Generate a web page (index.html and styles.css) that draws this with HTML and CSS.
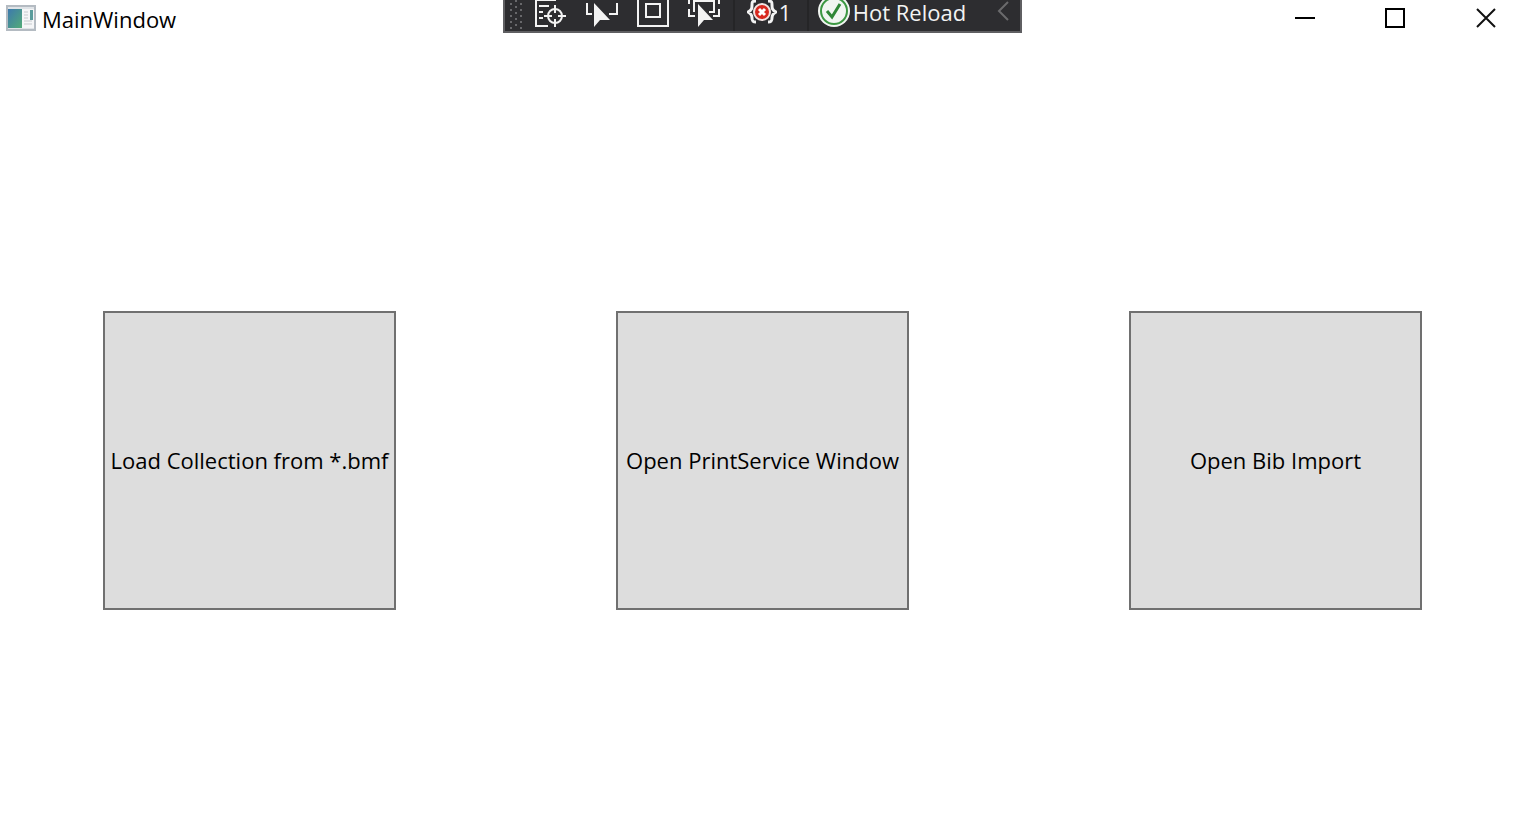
FILE: index.html
```html
<!DOCTYPE html>
<html lang="en">
<head>
<meta charset="utf-8">
<title>MainWindow</title>
<link rel="stylesheet" href="styles.css">
</head>
<body>
<header class="titlebar">
  <div class="caption">
    <svg class="app-icon" width="30" height="26" viewBox="0 0 30 26" aria-hidden="true">
      <defs><linearGradient id="pane" x1="0" y1="0" x2="1" y2="1"><stop offset="0" stop-color="#3d79ad"/><stop offset="1" stop-color="#52ab78"/></linearGradient></defs>
      <rect x="1" y="1" width="28" height="24" fill="#dfe3e7" stroke="#b4bbc2" stroke-width="2"/>
      <rect x="2" y="4" width="14" height="19" fill="url(#pane)"/>
      <rect x="16" y="4" width="12" height="19" fill="#f5f6f7"/>
      <path d="M18 7h4M18 10h4M18 13h4M18 16h8M18 19h8" stroke="#c5c9cd"/>
      <rect x="24" y="5" width="3" height="10" fill="#5a9c9c"/>
    </svg>
    <h1 class="caption-text">MainWindow</h1>
  </div>
  <div class="toolbar" role="toolbar" aria-label="Debug tools">
    <svg class="grip" width="12" height="31" viewBox="0 0 12 31" aria-hidden="true">
      <path d="M1 3v27M11 3v27" stroke="#68686b" stroke-width="2" stroke-dasharray="2 4"/>
      <path d="M6 0v30" stroke="#68686b" stroke-width="2" stroke-dasharray="2 4"/>
    </svg>
    <button class="tool" aria-label="Go to live visual tree">
      <svg width="32" height="31" viewBox="0 0 32 31" fill="none" stroke="#f3f3f3" stroke-width="2">
        <path d="M21 0H1v26h12M4 6h10M4 12h4M4 18h4"/>
        <circle cx="20" cy="16" r="7"/>
        <path d="M20 5v8M20 19v8M9 16h8M23 16h8"/>
      </svg>
    </button>
    <button class="tool" aria-label="Select element">
      <svg width="32" height="31" viewBox="0 0 32 31" fill="none" stroke="#f3f3f3" stroke-width="2">
        <path d="M1 3v11h5M31 3v11h-8"/>
        <path d="M8 3v24l6-7h10z" fill="#f3f3f3" stroke="none"/>
      </svg>
    </button>
    <button class="tool" aria-label="Display layout adorners">
      <svg width="32" height="31" viewBox="0 0 32 31" fill="none" stroke="#f3f3f3" stroke-width="2">
        <path d="M1 0v26h30V0M9 4h14v13H9z"/>
      </svg>
    </button>
    <button class="tool" aria-label="Track focused element">
      <svg width="32" height="31" viewBox="0 0 32 31" fill="none" stroke="#f3f3f3" stroke-width="2">
        <path d="M1 0v4M1 9v7h6M31 0v4M31 9v7h-6M6 12V1h20v11h-5"/>
        <path d="M10 4v23l6-7h9z" fill="#f3f3f3" stroke="none"/>
      </svg>
    </button>
    <span class="divider"></span>
    <button class="tool tool-errors" aria-label="1 binding failure">
      <svg width="30" height="31" viewBox="0 0 30 31" fill="none">
        <path d="M9 1C5 1 5 2 5 5s0 5-4 7c4 2 4 4 4 6s0 4 4 4M21 1c4 0 4 1 4 4s0 5 4 7c-4 2-4 4-4 6s0 4-4 4" stroke="#f3f3f3" stroke-width="3"/>
        <circle cx="15" cy="12" r="8" fill="#d8281e" stroke="#f3e4e2" stroke-width="2"/>
        <path d="M12 9l6 6M18 9l-6 6" stroke="#fff" stroke-width="3"/>
      </svg>
      <span>1</span>
    </button>
    <span class="divider"></span>
    <button class="tool tool-reload">
      <svg width="32" height="31" viewBox="0 0 32 31" fill="none">
        <circle cx="16" cy="11" r="16" fill="#f1f5f1"/>
        <circle cx="16" cy="11" r="13" stroke="#3c9742" stroke-width="2"/>
        <path d="M9 11l5 6 8-13" stroke="#2f8636" stroke-width="3"/>
      </svg>
      <span>Hot Reload</span>
    </button>
    <button class="tool tool-collapse" aria-label="Collapse toolbar">
      <svg width="14" height="31" viewBox="0 0 14 31" fill="none"><path d="M11 2L2 11l9 9" stroke="#6a6a6c" stroke-width="2"/></svg>
    </button>
  </div>
  <div class="window-controls">
    <button class="window-button" aria-label="Minimize"><svg width="20" height="20" viewBox="0 0 20 20"><path d="M0 10h20" stroke="#000" stroke-width="2"/></svg></button>
    <button class="window-button" aria-label="Maximize"><svg width="20" height="20" viewBox="0 0 20 20"><path d="M1 1h18v18H1z" fill="none" stroke="#000" stroke-width="2"/></svg></button>
    <button class="window-button" aria-label="Close"><svg width="20" height="20" viewBox="0 0 20 20"><path d="M1 1l18 18M19 1L1 19" stroke="#111" stroke-width="2"/></svg></button>
  </div>
</header>
<main class="content">
  <button class="tile">Load Collection from *.bmf</button>
  <button class="tile">Open PrintService Window</button>
  <button class="tile">Open Bib Import</button>
</main>
</body>
</html>
```
FILE: styles.css
```css
* {
  box-sizing: border-box;
}

body {
  margin: 0;
  min-height: 100vh;
  display: flex;
  flex-direction: column;
  background: #fff;
  color: #000;
  font-family: "Open Sans", "Noto Sans", sans-serif;
  font-size: 22px;
}

button {
  padding: 0;
  border: 0;
  background: none;
  color: inherit;
  font: inherit;
}

svg {
  display: block;
  flex: none;
}

.titlebar {
  display: grid;
  grid-template-columns: 503fr 519px 493fr;
  align-items: start;
}

.caption {
  display: flex;
  align-items: center;
  gap: 6px;
  height: 36px;
  padding-left: 6px;
}

.caption-text {
  margin: 0;
  padding-top: 2px;
  font-size: 22px;
  font-weight: 400;
  line-height: 30px;
}

.toolbar {
  display: flex;
  height: 33px;
  border: 2px solid #5f5f62;
  border-top: 0;
  background: #2d2d30;
  color: #f3f3f3;
}

.grip {
  margin: 0 3px 0 5px;
}

.tool {
  display: flex;
  justify-content: center;
  width: 51px;
  line-height: 24px;
}

.divider {
  width: 2px;
  margin-left: 4px;
  background: #252527;
}

.tool-errors {
  width: 68px;
  gap: 2px;
}

.tool-reload {
  width: 166px;
  gap: 3px;
}

.tool-collapse {
  width: 24px;
  margin: 0 4px 0 auto;
}

.window-controls {
  display: flex;
  justify-content: flex-end;
}

.window-button {
  display: flex;
  align-items: center;
  justify-content: center;
  width: 90px;
  height: 36px;
}

.window-button:last-child {
  width: 59px;
  margin-left: 16px;
}

.content {
  flex: 1;
  display: grid;
  grid-template-columns: repeat(3, 1fr);
  column-gap: 220px;
  align-items: center;
  padding: 57px 93px 0 103px;
}

.tile {
  aspect-ratio: 293 / 299;
  padding-bottom: 2px;
  border: 2px solid #707070;
  background: #ddd;
  white-space: nowrap;
}
```
